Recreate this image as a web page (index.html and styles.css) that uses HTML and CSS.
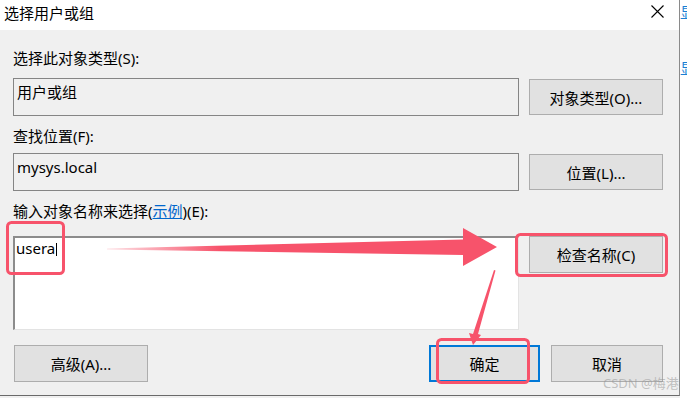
FILE: index.html
```html
<!DOCTYPE html>
<html lang="zh-CN">
<head>
  <meta charset="UTF-8">
  <title>选择用户或组</title>
  <link rel="stylesheet" href="styles.css">
</head>
<body>
  <div class="screen">
    <div class="dialog">
      <div class="titlebar">
        <span class="title">选择用户或组</span>
        <svg class="close" width="13" height="13" viewBox="0 0 13 13">
          <path d="M0.5 0.5 L12.5 12.5 M12.5 0.5 L0.5 12.5" stroke="#000" stroke-width="1.1" fill="none"/>
        </svg>
      </div>

      <div class="body">
        <div class="label first">选择此对象类型(S):</div>
        <div class="row">
          <div class="field readonly">用户或组</div>
          <button class="btn">对象类型(O)...</button>
        </div>

        <div class="label second">查找位置(F):</div>
        <div class="row">
          <div class="field readonly">mysys.local</div>
          <button class="btn">位置(L)...</button>
        </div>

        <div class="label third">输入对象名称来选择(<a class="link" href="#">示例</a>)(E):</div>
        <div class="row names">
          <div class="field input">usera<span class="caret"></span></div>
          <button class="btn">检查名称(C)</button>
        </div>

        <div class="footer">
          <button class="btn advanced">高级(A)...</button>
          <button class="btn ok">确定</button>
          <button class="btn cancel">取消</button>
        </div>
      </div>
    </div>

    <div class="behind">
      <span>显</span>
      <span>显</span>
    </div>

    <svg class="marks" width="687" height="398" viewBox="0 0 687 398">
      <defs>
        <linearGradient id="fade" x1="105" y1="0" x2="220" y2="0" gradientUnits="userSpaceOnUse">
          <stop offset="0" stop-color="#f7536b" stop-opacity="0.15"/>
          <stop offset="1" stop-color="#f7536b"/>
        </linearGradient>
      </defs>
      <rect x="7.5" y="222.5" width="56" height="51" rx="4" fill="none" stroke="#f7536b" stroke-width="3"/>
      <rect x="516.5" y="234.5" width="150" height="41" rx="4" fill="none" stroke="#f7536b" stroke-width="3"/>
      <rect x="437.5" y="339.5" width="91" height="43" rx="4" fill="none" stroke="#f7536b" stroke-width="3"/>
      <polygon fill="url(#fade)" points="107,248.5 463,239.5 463,228 497,247 463,266 463,255 107,249.5"/>
      <polygon fill="#f7536b" points="494,270 495.5,270.5 478,334 481,335 473,345 469,333 473,334"/>
    </svg>

    <div class="watermark">CSDN @梅港</div>
  </div>
</body>
</html>
```

FILE: styles.css
```css
* {
  box-sizing: border-box;
}

body {
  margin: 0;
  font-family: "Noto Sans", "Noto Sans CJK SC", sans-serif;
  font-size: 15px;
  color: #000;
  background: #fff;
}

.screen {
  position: relative;
  display: flex;
  width: 687px;
  height: 398px;
  overflow: hidden;
  background: #f0f0f0;
}

.dialog {
  flex: none;
  width: 680px;
  height: 396px;
  background: #f0f0f0;
  border-right: 1px solid #8a8a8a;
  border-bottom: 1px solid #6a6a6a;
}

.titlebar {
  display: flex;
  justify-content: space-between;
  align-items: flex-start;
  height: 30px;
  padding: 3px 15px 0 4px;
  background: #fff;
}

.title {
  line-height: 20px;
}

.close {
  margin-top: 2px;
}

.body {
  display: flex;
  flex-direction: column;
  padding: 0 16px 0 13px;
}

.label {
  line-height: 20px;
  white-space: nowrap;
}

.label.first {
  margin-top: 18px;
  margin-bottom: 10px;
}

.label.second {
  margin-top: 10px;
  margin-bottom: 7px;
}

.label.third {
  margin-top: 10px;
  margin-bottom: 15px;
}

.link {
  color: #0066cc;
  text-decoration: underline;
}

.row {
  display: flex;
  align-items: center;
  gap: 10px;
}

.row.names {
  align-items: flex-start;
}

.field {
  width: 506px;
  line-height: 20px;
  white-space: nowrap;
}

.field.readonly {
  height: 38px;
  padding: 3px 3px 0 3px;
  background: #f0f0f0;
  border: 1px solid #858585;
}

.field.input {
  height: 94px;
  padding: 0 1px;
  background: #fff;
  border-top: 2px solid #8c8c8c;
  border-left: 2px solid #8c8c8c;
  border-right: 1px solid #e3e3e3;
  border-bottom: 1px solid #e3e3e3;
}

.caret {
  display: inline-block;
  width: 1px;
  height: 13px;
  margin-left: 1px;
  background: #000;
  vertical-align: -2px;
}

.btn {
  width: 134px;
  height: 36px;
  padding: 0;
  font: inherit;
  color: #000;
  background: #e1e1e1;
  border: 1px solid #adadad;
}

.names .btn {
  height: 37px;
}

.footer {
  display: flex;
  align-items: flex-start;
  margin-top: 15px;
  margin-bottom: 13px;
}

.footer .btn {
  height: 37px;
}

.advanced {
  margin-left: 1px;
}

.ok {
  width: 111px;
  margin-left: auto;
  margin-right: 11px;
  border: 2px solid #0078d7;
}

.cancel {
  width: 112px;
}

.behind {
  flex: 1;
  display: flex;
  flex-direction: column;
  gap: 36px;
  padding-top: 2px;
  background: #fff;
  color: #1a7fd4;
  line-height: 20px;
  overflow: hidden;
  white-space: nowrap;
}

.marks {
  position: absolute;
  left: 0;
  top: 0;
}

.watermark {
  position: absolute;
  left: 603px;
  top: 374px;
  font-size: 13px;
  line-height: 18px;
  color: rgba(150, 150, 150, 0.55);
  white-space: nowrap;
}
```
